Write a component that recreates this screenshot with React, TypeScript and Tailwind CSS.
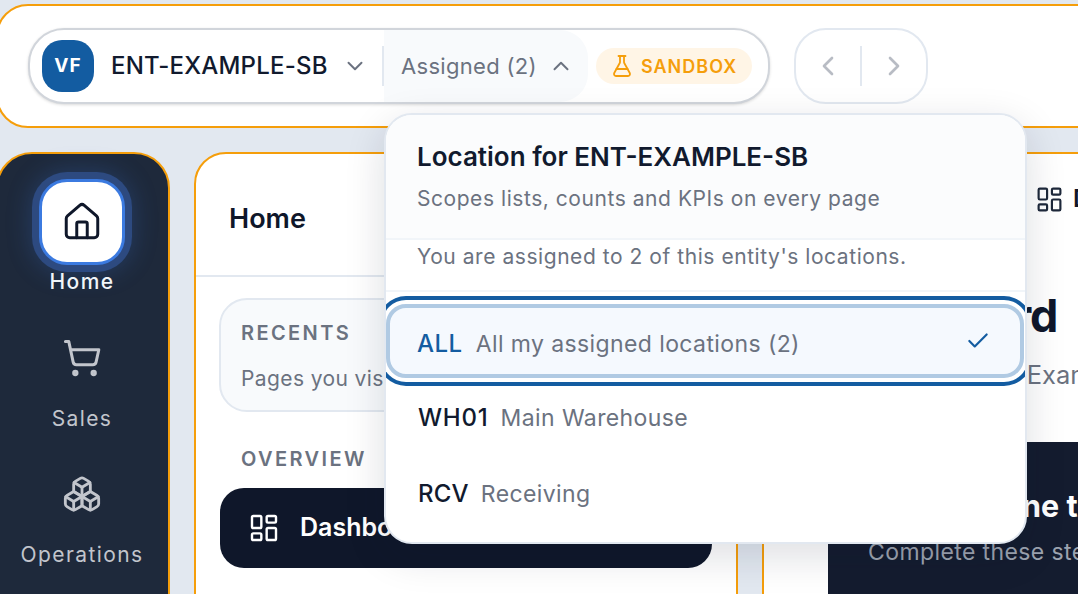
import React from "react";
import {
  Boxes,
  Check,
  ChevronDown,
  ChevronLeft,
  ChevronRight,
  ChevronUp,
  FlaskConical,
  House,
  LayoutDashboard,
  ShoppingCart,
} from "lucide-react";

const App: React.FC = () => {
  return (
    <div className="relative w-[1078px] h-[594px] overflow-hidden bg-[#e2e8f0] font-['Inter',sans-serif] pt-1">
      {/* Top bar */}
      <header className="-ml-1 w-[1120px] h-[124px] bg-white border-2 border-[#f59e0b] rounded-[32px] flex items-center gap-6 pl-[30px] shrink-0">
        <div className="flex items-stretch h-[76px] w-[742px] bg-white border-2 border-[#d1d5db] rounded-[36px] shadow-[0_1px_3px_rgba(0,0,0,0.15)]">
          <div className="flex items-center w-[352px] pl-3">
            <div className="w-[52px] h-[52px] shrink-0 rounded-[20px] bg-[#135ca1] text-white text-[19px] font-bold tracking-[1px] flex items-center justify-center">
              VF
            </div>
            <span className="ml-[17px] text-[24px] font-medium text-[#111a2e] tracking-[0.2px] whitespace-nowrap">ENT-EXAMPLE-SB</span>
            <ChevronDown className="ml-[14px] w-[26px] h-[26px] shrink-0 text-[#6b7280]" strokeWidth={1.8} />
          </div>
          <div className="w-[2px] h-10 self-center bg-[#e2e8f0]" />
          <div className="w-[204px] bg-[#f8fafc] rounded-r-[28px] flex items-center pl-[17px] gap-[11px]">
            <span className="text-[22px] text-[#6b7280] tracking-[0.3px]">Assigned (2)</span>
            <ChevronUp className="w-[26px] h-[26px] text-[#6b7280]" strokeWidth={1.8} />
          </div>
          <div className="ml-2 self-center h-9 w-[156px] rounded-[18px] bg-[#fff5e6] flex items-center pl-[14px] gap-[7px] text-[#f59e0b]">
            <FlaskConical className="w-6 h-6" strokeWidth={1.8} />
            <span className="text-[18px] font-semibold tracking-[1px]">SANDBOX</span>
          </div>
        </div>
        <div className="flex items-center w-[134px] h-[76px] border-2 border-[#e2e8f0] rounded-[32px]">
          <div className="flex-1 flex justify-center">
            <ChevronLeft className="w-8 h-8 text-[#b8bcc4]" />
          </div>
          <div className="w-[2px] h-10 bg-[#e2e8f0]" />
          <div className="flex-1 flex justify-center">
            <ChevronRight className="w-8 h-8 text-[#b8bcc4]" />
          </div>
        </div>
      </header>

      <div className="flex mt-6 -ml-1 gap-6 h-[500px]">
        {/* Sidebar */}
        <nav className="w-[174px] shrink-0 bg-[#1e293b] border-2 border-[#f59e0b] rounded-[36px] flex flex-col items-center pt-[25px] pr-[2px]">
          <div className="w-[86px] h-[86px] shrink-0 bg-white rounded-[28px] border-[3px] border-[#3b7ae0] shadow-[0_0_0_7px_#2d4a80,0_0_24px_8px_rgba(59,122,224,0.25)] flex items-center justify-center">
            <House className="w-[42px] h-[42px] text-[#0f172a]" strokeWidth={1.7} />
          </div>
          <span className="mt-[5px] text-[21px] font-medium leading-[24px] tracking-[1.4px] text-[#f1f5f9]">Home</span>
          <ShoppingCart className="mt-[44px] w-10 h-10 shrink-0 text-[#c2c5cc]" strokeWidth={1.8} />
          <span className="mt-[29px] text-[21px] leading-[24px] tracking-[1.4px] text-[#c2c5cc]">Sales</span>
          <Boxes className="mt-[43px] w-10 h-10 shrink-0 text-[#c2c5cc]" strokeWidth={1.7} />
          <span className="mt-[29px] text-[21px] leading-[24px] tracking-[1.4px] text-[#c2c5cc]">Operations</span>
        </nav>

        {/* Section menu */}
        <section className="w-[544px] shrink-0 bg-white border-2 border-[#f59e0b] rounded-[32px] overflow-hidden">
          <div className="h-[123px] border-b-2 border-[#e2e8f0] flex items-start pl-[33px] pt-[45px]">
            <h2 className="text-[27px] leading-[40px] font-semibold text-[#0f172a]">Home</h2>
          </div>
          <div className="pl-[23px] pr-6 pt-[21px]">
            <div className="h-[114px] rounded-[28px] bg-[#f8fafc] border-2 border-[#e2e8f0] pl-5 pt-[19px]">
              <p className="text-[20px] font-semibold tracking-[2.4px] text-[#6b7280] leading-[28px]">RECENTS</p>
              <p className="mt-[18px] text-[21px] tracking-[0.4px] text-[#6b7280] leading-[28px]">Pages you visited recently</p>
            </div>
            <p className="mt-[33px] ml-[22px] text-[20px] font-semibold tracking-[2.4px] text-[#6b7280] leading-[28px]">OVERVIEW</p>
            <div className="mt-[15px] ml-px h-20 w-[492px] rounded-[24px] bg-[#0f172a] flex items-center pl-[28px] gap-[20px]">
              <LayoutDashboard className="w-8 h-8 text-white" strokeWidth={1.8} />
              <span className="text-[25px] font-semibold text-white">Dashboard</span>
            </div>
          </div>
        </section>

        {/* Main page */}
        <main className="flex-1 min-w-0 bg-white border-t-2 border-l-2 border-[#f59e0b] rounded-tl-[32px] pl-[64px] overflow-hidden whitespace-nowrap">
          <div className="h-[121px] flex items-start pt-[27px]">
            <div className="ml-[207px] flex items-center gap-[9px]">
              <LayoutDashboard className="w-[29px] h-[29px] shrink-0 text-[#1e293b]" strokeWidth={1.8} />
              <span className="text-[24px] font-semibold text-[#0f172a]">Dashboard</span>
            </div>
          </div>
          <h1 className="mt-[13px] text-[45px] leading-[56px] font-bold tracking-[-1.2px] text-[#0f172a]">Dashboard</h1>
          <p className="mt-[15px] text-[25.5px] leading-[32px] text-[#6b7280]">Your account of Example Entity</p>
          <div className="mt-[51px] h-[200px] bg-[#141c2f] rounded-tl-[24px] pl-10 pt-[44px]">
            <p className="text-[30.5px] leading-[40px] font-bold text-white">Getting done today</p>
            <p className="mt-[12px] text-[23px] leading-[28px] tracking-[0.4px] text-[#9ca3af]">Complete these steps to get started</p>
          </div>
        </main>
      </div>

      {/* Location dropdown */}
      <div className="absolute left-[384px] top-[113px] w-[643px] h-[431px] bg-white border-2 border-[#e2e8f0] rounded-[28px] overflow-hidden shadow-[0_12px_40px_rgba(15,23,42,0.14)]">
        <div className="h-[125px] bg-[#fbfcfd] border-b-2 border-[#f1f5f9] pl-[31px] pt-[24px]">
          <h3 className="text-[26px] leading-[36px] font-semibold text-[#111a2e]">Location for ENT-EXAMPLE-SB</h3>
          <p className="mt-[9px] text-[21px] leading-[30px] tracking-[0.55px] text-[#6b7280]">Scopes lists, counts and KPIs on every page</p>
        </div>
        <div className="h-[52px] border-b-2 border-[#f1f5f9] pl-[31px] pt-[2px] flex items-start">
          <p className="text-[21px] leading-[30px] tracking-[0.55px] text-[#6b7280]">You are assigned to 2 of this entity's locations.</p>
        </div>
        <div className="pt-[12px] pr-px">
          <div className="h-[74px] rounded-[20px] bg-[#f5f9fe] border-4 border-[#b0cae3] shadow-[0_0_0_4px_#ffffff,0_0_0_8px_#135ca1] flex items-center pl-[27px] pt-[6px]">
            <span className="text-[24px] font-medium tracking-[0.5px] text-[#135ca1]">ALL</span>
            <span className="ml-[13px] text-[23px] tracking-[0.4px] text-[#6b7280]">All my assigned locations (2)</span>
            <Check className="ml-auto mr-[29px] -mt-[6px] w-[26px] h-[26px] text-[#135ca1]" strokeWidth={2} />
          </div>
          <div className="h-[74px] mt-[3px] flex items-center pl-[32px]">
            <span className="text-[24px] font-medium tracking-[0.8px] text-[#111a2e]">WH01</span>
            <span className="ml-[12px] text-[23px] tracking-[0.4px] text-[#6b7280]">Main Warehouse</span>
          </div>
          <div className="h-[74px] mt-[2px] flex items-center pl-[32px]">
            <span className="text-[24px] font-medium tracking-[0.2px] text-[#111a2e]">RCV</span>
            <span className="ml-[12px] text-[23px] tracking-[0.4px] text-[#6b7280]">Receiving</span>
          </div>
        </div>
      </div>
    </div>
  );
};

export default App;
